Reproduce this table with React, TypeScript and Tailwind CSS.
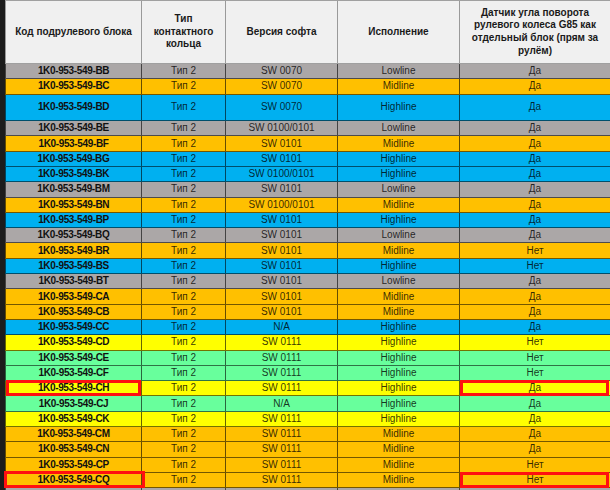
const GRAY = 'bg-[#aba7a7]';
const ORANGE = 'bg-[#ffc000]';
const BLUE = 'bg-[#00b0f0]';
const YELLOW = 'bg-[#ffff00]';
const GREEN = 'bg-[#68ff9c]';

type Row = {
  code: string;
  sw: string;
  line: string;
  g85: string;
  bg: string;
  tall?: boolean;
  mark?: 'thin' | 'wide';
};

const rows: Row[] = [
  { code: '1K0-953-549-BB', sw: 'SW 0070', line: 'Lowline', g85: 'Да', bg: GRAY },
  { code: '1K0-953-549-BC', sw: 'SW 0070', line: 'Midline', g85: 'Да', bg: ORANGE },
  { code: '1K0-953-549-BD', sw: 'SW 0070', line: 'Highline', g85: 'Да', bg: BLUE, tall: true },
  { code: '1K0-953-549-BE', sw: 'SW 0100/0101', line: 'Lowline', g85: 'Да', bg: GRAY },
  { code: '1K0-953-549-BF', sw: 'SW 0101', line: 'Midline', g85: 'Да', bg: ORANGE },
  { code: '1K0-953-549-BG', sw: 'SW 0101', line: 'Highline', g85: 'Да', bg: BLUE },
  { code: '1K0-953-549-BK', sw: 'SW 0100/0101', line: 'Highline', g85: 'Да', bg: BLUE },
  { code: '1K0-953-549-BM', sw: 'SW 0101', line: 'Lowline', g85: 'Да', bg: GRAY },
  { code: '1K0-953-549-BN', sw: 'SW 0100/0101', line: 'Midline', g85: 'Да', bg: ORANGE },
  { code: '1K0-953-549-BP', sw: 'SW 0101', line: 'Highline', g85: 'Да', bg: BLUE },
  { code: '1K0-953-549-BQ', sw: 'SW 0101', line: 'Lowline', g85: 'Да', bg: GRAY },
  { code: '1K0-953-549-BR', sw: 'SW 0101', line: 'Midline', g85: 'Нет', bg: ORANGE },
  { code: '1K0-953-549-BS', sw: 'SW 0101', line: 'Highline', g85: 'Нет', bg: BLUE },
  { code: '1K0-953-549-BT', sw: 'SW 0101', line: 'Lowline', g85: 'Да', bg: GRAY },
  { code: '1K0-953-549-CA', sw: 'SW 0101', line: 'Midline', g85: 'Да', bg: ORANGE },
  { code: '1K0-953-549-CB', sw: 'SW 0101', line: 'Midline', g85: 'Да', bg: ORANGE },
  { code: '1K0-953-549-CC', sw: 'N/A', line: 'Highline', g85: 'Да', bg: BLUE },
  { code: '1K0-953-549-CD', sw: 'SW 0111', line: 'Highline', g85: 'Нет', bg: YELLOW },
  { code: '1K0-953-549-CE', sw: 'SW 0111', line: 'Highline', g85: 'Нет', bg: GREEN },
  { code: '1K0-953-549-CF', sw: 'SW 0111', line: 'Highline', g85: 'Нет', bg: GREEN },
  { code: '1K0-953-549-CH', sw: 'SW 0111', line: 'Highline', g85: 'Да', bg: YELLOW, mark: 'thin' },
  { code: '1K0-953-549-CJ', sw: 'N/A', line: 'Highline', g85: 'Да', bg: GREEN },
  { code: '1K0-953-549-CK', sw: 'SW 0111', line: 'Highline', g85: 'Да', bg: YELLOW },
  { code: '1K0-953-549-CM', sw: 'SW 0111', line: 'Midline', g85: 'Да', bg: ORANGE },
  { code: '1K0-953-549-CN', sw: 'SW 0111', line: 'Midline', g85: 'Да', bg: ORANGE },
  { code: '1K0-953-549-CP', sw: 'SW 0111', line: 'Midline', g85: 'Нет', bg: ORANGE },
  { code: '1K0-953-549-CQ', sw: 'SW 0111', line: 'Midline', g85: 'Нет', bg: ORANGE, mark: 'wide' },
];

const cols = 'grid grid-cols-[137px_84px_112px_122px_150px]';

export default function App() {
  return (
    <div
      className="flex h-[490px] w-[610px] overflow-hidden bg-[#1c1c1c]"
      style={{ fontFamily: '"Liberation Sans", Arial, sans-serif' }}
    >
      <div className="w-[5px] shrink-0" />
      <div className="flex flex-col w-[605px]">
        {/* ── Шапка ─────────────────────────── */}
        <div
          className={`${cols} h-[64px] shrink-0 bg-[#f0f0f0] border-t border-b border-[#a0a0a0] text-[10px] font-bold text-[#1a1a1a] leading-[12.7px] text-center`}
        >
          <div className="flex items-center justify-center border-l border-r border-[#9a9a9a]">
            Код подрулевого блока
          </div>
          <div className="flex items-center justify-center border-r border-[#9a9a9a]">
            Тип
            <br />
            контактного
            <br />
            кольца
          </div>
          <div className="flex items-center justify-center border-r border-[#9a9a9a]">
            Версия софта
          </div>
          <div className="flex items-center justify-center border-r border-[#9a9a9a]">
            Исполнение
          </div>
          <div className="flex items-center justify-center">
            Датчик угла поворота
            <br />
            рулевого колеса G85 как
            <br />
            отдельный блок (прям за
            <br />
            рулём)
          </div>
        </div>

        {/* ── Строки ────────────────────────── */}
        {rows.map((r, i) => (
          <div
            key={i}
            className={`${cols} ${r.bg} ${r.tall ? 'h-[26.5px]' : 'h-[15.3px]'} shrink-0 border-b border-black/55 text-[10px] text-black/80 text-center leading-none`}
          >
            <div className="relative flex items-center justify-center border-l border-r border-black/60 font-bold text-[#111] tracking-[-0.35px]">
              {r.code}
              {r.mark === 'thin' && (
                <span className="absolute -top-px left-0 right-0 -bottom-px border-[3px] border-[#ff1010]" />
              )}
              {r.mark === 'wide' && (
                <span className="absolute -top-[2px] -left-[2px] -right-[4px] -bottom-[1px] border-[3px] border-[#ff1010]" />
              )}
            </div>
            <div className="flex items-center justify-center border-r border-black/60">Тип 2</div>
            <div className="flex items-center justify-center border-r border-black/60">{r.sw}</div>
            <div className="flex items-center justify-center border-r border-black/60">{r.line}</div>
            <div className="relative flex items-center justify-center">
              {r.g85}
              {r.mark && (
                <span className="absolute -top-px left-0 right-[1px] -bottom-px border-[3px] border-[#ff1010]" />
              )}
            </div>
          </div>
        ))}
        <div className={`${cols} ${GRAY} h-[4px] shrink-0`}>
          <div className="border-l border-r border-black/60" />
          <div className="border-r border-black/60" />
          <div className="border-r border-black/60" />
          <div className="border-r border-black/60" />
          <div />
        </div>
      </div>
    </div>
  );
}
